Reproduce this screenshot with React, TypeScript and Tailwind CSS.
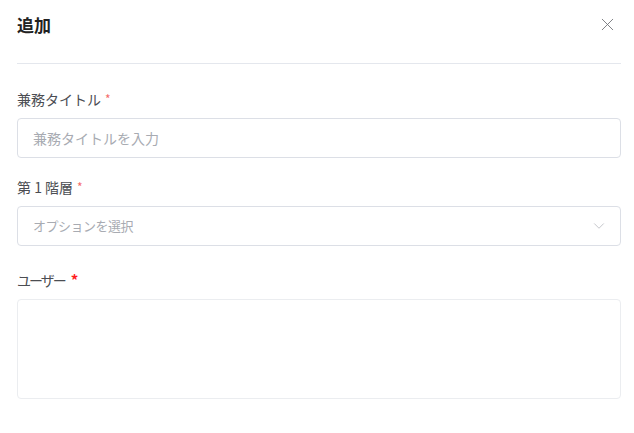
import { X, ChevronDown } from "lucide-react";

const font = { fontFamily: '"Noto Sans CJK JP", "Noto Sans", sans-serif' };

function Label({ text, strong }: { text: string; strong?: boolean }) {
    return (
        <div className="h-[20px] flex items-center text-[14px] leading-[20px] text-[#4b4d52]">
            <span className={strong ? "tracking-[-2px]" : ""}>{text}</span>
            {strong ? (
                <span className="ml-[6px] text-[15px] font-bold text-[#ff1e1e]">*</span>
            ) : (
                <span className="ml-[4px] text-[12px] text-[#f56c6c]">*</span>
            )}
        </div>
    );
}

export default function App() {
    return (
        <div className="w-[634px] h-[433px] bg-white pl-[17px] pr-[13px]" style={font}>
            <div className="h-[64px] flex items-start justify-between border-b border-[#e4e7ed]">
                <h1 className="mt-[13px] text-[17px] leading-[24px] font-bold text-[#222]">追加</h1>
                <button className="mt-[14px] mr-[3px] text-[#6f7176]">
                    <X size={21} strokeWidth={1} />
                </button>
            </div>

            <div className="pt-[25px]">
                <Label text="兼務タイトル" />
                <div className="mt-[9px] h-[40px] rounded-[4px] border border-[#dcdfe6] flex items-center px-[15px]">
                    <input
                        className="w-full outline-none text-[14px] text-[#333] placeholder:text-[#a8abb2]"
                        placeholder="兼務タイトルを入力"
                        style={font}
                    />
                </div>

                <div className="mt-[19px]">
                    <Label text="第 1 階層" />
                </div>
                <div className="mt-[9px] h-[40px] rounded-[4px] border border-[#dcdfe6] flex items-center justify-between pl-[15px] pr-[12px]">
                    <span className="text-[13px] text-[#a8abb2] tracking-[-0.5px]">オプションを選択</span>
                    <ChevronDown size={18} strokeWidth={1} className="text-[#b0b3ba]" />
                </div>

                <div className="mt-[24px]">
                    <Label text="ユーザー" strong />
                </div>
                <div className="mt-[9px] h-[100px] rounded-[4px] border border-[#ebedf0]" />
            </div>
        </div>
    );
}
